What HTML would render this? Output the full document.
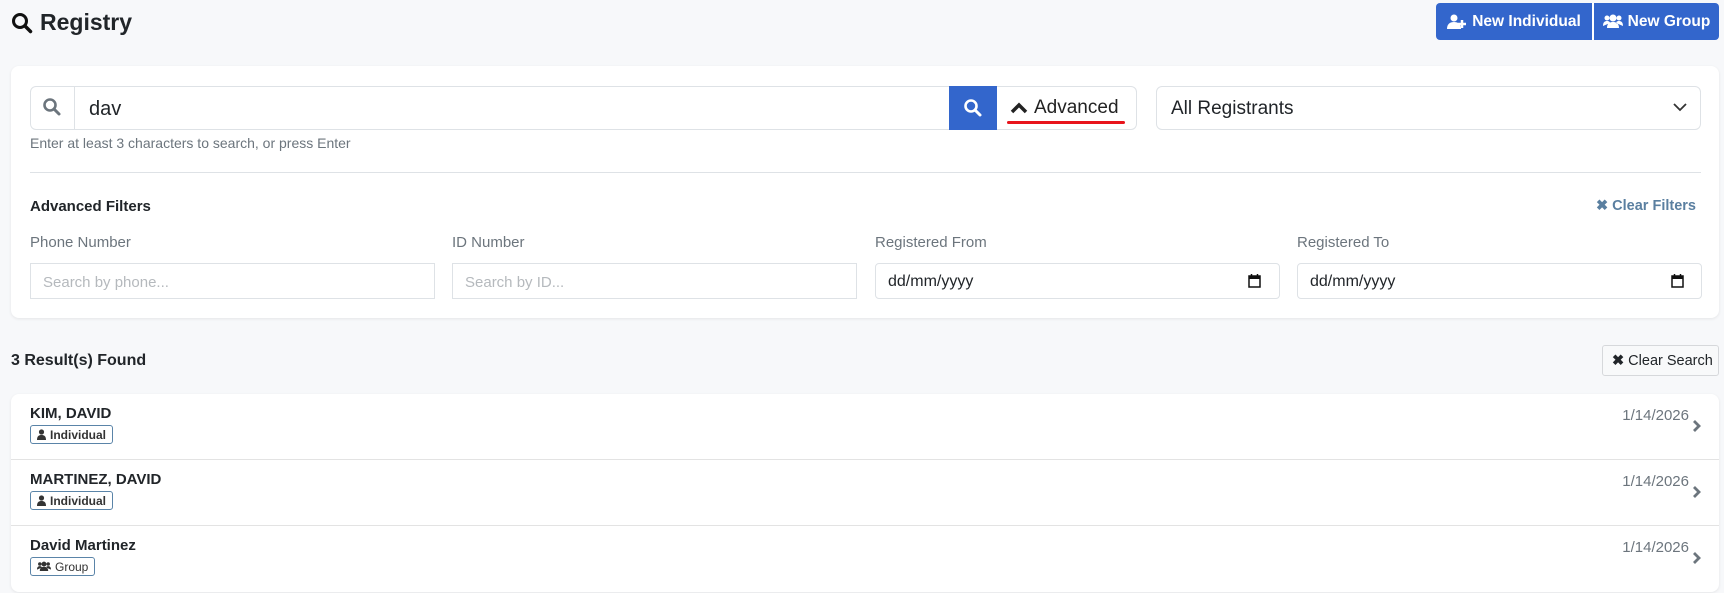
<!DOCTYPE html>
<html><head><meta charset="utf-8"><style>
*{box-sizing:border-box;margin:0;padding:0}
body{width:1724px;height:593px;background:#f7f8fa;font-family:"Liberation Sans",sans-serif;color:#212529;position:relative;overflow:hidden}
.abs{position:absolute}
.title{left:11px;top:9px;font-size:23px;font-weight:bold;display:flex;align-items:center;gap:7px}
.btns{left:1436px;top:3px;height:37px;display:flex}
.btn{background:#3366cc;color:#fff;font-weight:bold;font-size:15.5px;display:flex;align-items:center;gap:5px;height:37px;white-space:nowrap}
.card{background:#fff;border-radius:8px;box-shadow:0 1px 3px rgba(0,0,0,.08)}
.inp{border:1px solid #dee2e6;background:#fff}
.lbl{font-size:15px;color:#6c757d}
.row{position:absolute;left:0;right:0;height:66px;border-bottom:1px solid #e3e3e3}
.name{position:absolute;left:19px;top:11px;font-weight:bold;font-size:15px}
.badge{position:absolute;left:19px;top:31px;height:19px;border:1px solid #5a84a8;border-radius:3px;font-size:12px;font-weight:bold;display:flex;align-items:center;gap:4px;padding:0 6px;color:#333}
.date{position:absolute;right:30px;top:13px;font-size:15px;color:#6c757d}
.chev{position:absolute;right:17px;top:25px}
</style></head><body>
<div class="abs title"><svg width="22" height="22" viewBox="0 0 22 22"><circle cx="9" cy="9" r="6.5" fill="none" stroke="#111" stroke-width="3"/><path d="M14 14l5.5 5.5" stroke="#111" stroke-width="3.5" stroke-linecap="round"/></svg>Registry</div>
<div class="abs btns">
<div class="btn" style="border-radius:4px 0 0 4px;width:156px;justify-content:center"><svg width="20" height="16" viewBox="0 0 20 16"><circle cx="7" cy="4" r="3.5" fill="#fff"/><path d="M0 15c0-5 3-7 7-7s7 2 7 7z" fill="#fff"/><path d="M15 6v8M11 10h8" stroke="#fff" stroke-width="2.5"/></svg>New Individual</div>
<div style="width:2px;background:#fff"></div>
<div class="btn" style="border-radius:0 4px 4px 0;width:125px;justify-content:center"><svg width="20" height="15" viewBox="0 0 20 15"><circle cx="4" cy="4" r="2.5" fill="#fff"/><circle cx="16" cy="4" r="2.5" fill="#fff"/><circle cx="10" cy="4" r="3.5" fill="#fff"/><path d="M0 12c0-4 2-5 4-5s3 1 3 2zM20 12c0-4-2-5-4-5s-3 1-3 2zM4 14c0-5 3-6 6-6s6 1 6 6z" fill="#fff"/></svg>New Group</div>
</div>

<div class="abs card" style="left:11px;top:66px;width:1708px;height:252px"></div>
<div class="abs inp" style="left:30px;top:86px;width:967px;height:44px;border-radius:6px 0 0 6px"></div>
<div class="abs" style="left:74px;top:86px;width:1px;height:44px;background:#dee2e6"></div>
<svg class="abs" style="left:42px;top:97px" width="20" height="20" viewBox="0 0 20 20"><circle cx="8" cy="8" r="5.5" fill="none" stroke="#6c757d" stroke-width="2.6"/><path d="M12 12l5 5" stroke="#6c757d" stroke-width="3" stroke-linecap="round"/></svg>
<div class="abs" style="left:89px;top:98px;font-size:20px">dav</div>
<div class="abs" style="left:949px;top:86px;width:48px;height:44px;background:#3366cc"></div>
<svg class="abs" style="left:963px;top:98px" width="20" height="20" viewBox="0 0 20 20"><circle cx="8" cy="8" r="5.5" fill="none" stroke="#fff" stroke-width="2.6"/><path d="M12 12l5 5" stroke="#fff" stroke-width="3" stroke-linecap="round"/></svg>
<div class="abs inp" style="left:997px;top:86px;width:140px;height:44px;border-radius:0 6px 6px 0;border-left:none"></div>
<svg class="abs" style="left:1010px;top:101px" width="18" height="14" viewBox="0 0 18 14"><path d="M2 11l7-7 7 7" fill="none" stroke="#222" stroke-width="3.5"/></svg>
<div class="abs" style="left:1034px;top:97px;font-size:19px;color:#222">Advanced</div>
<div class="abs" style="left:1007px;top:121px;width:118px;height:3px;background:#e8141c;border-radius:2px"></div>
<div class="abs inp" style="left:1156px;top:86px;width:545px;height:44px;border-radius:6px"></div>
<div class="abs" style="left:1171px;top:98px;font-size:19px">All Registrants</div>
<svg class="abs" style="left:1673px;top:102px" width="14" height="10" viewBox="0 0 14 10"><path d="M1 2l6 6 6-6" fill="none" stroke="#333" stroke-width="1.8"/></svg>
<div class="abs" style="left:30px;top:135px;font-size:14px;color:#6c757d">Enter at least 3 characters to search, or press Enter</div>
<div class="abs" style="left:30px;top:172px;width:1671px;height:1px;background:#dee2e6"></div>
<div class="abs" style="left:30px;top:198px;font-size:15px;font-weight:bold">Advanced Filters</div>
<div class="abs" style="left:1596px;top:198px;font-size:14.5px;color:#5a7fa0;font-weight:bold">✖ Clear Filters</div>
<div class="abs lbl" style="left:30px;top:234px">Phone Number</div>
<div class="abs lbl" style="left:452px;top:234px">ID Number</div>
<div class="abs lbl" style="left:875px;top:234px">Registered From</div>
<div class="abs lbl" style="left:1297px;top:234px">Registered To</div>
<div class="abs inp" style="left:30px;top:263px;width:405px;height:36px;padding:10px 12px;font-size:15px;color:#b5b9bd">Search by phone...</div>
<div class="abs inp" style="left:452px;top:263px;width:405px;height:36px;padding:10px 12px;font-size:15px;color:#b5b9bd">Search by ID...</div>
<div class="abs inp" style="left:875px;top:263px;width:405px;height:36px;padding:9px 12px;font-size:16px;border-radius:4px">dd/mm/yyyy</div>
<div class="abs inp" style="left:1297px;top:263px;width:405px;height:36px;padding:9px 12px;font-size:16px;border-radius:4px">dd/mm/yyyy</div>
<svg class="abs" style="left:1248px;top:274px" width="13" height="14" viewBox="0 0 13 14"><rect x="1" y="2" width="11" height="11" fill="none" stroke="#111" stroke-width="1.5"/><rect x="1" y="2" width="11" height="3" fill="#111"/><path d="M3.5 0v3M9.5 0v3" stroke="#111" stroke-width="1.5"/></svg>
<svg class="abs" style="left:1671px;top:274px" width="13" height="14" viewBox="0 0 13 14"><rect x="1" y="2" width="11" height="11" fill="none" stroke="#111" stroke-width="1.5"/><rect x="1" y="2" width="11" height="3" fill="#111"/><path d="M3.5 0v3M9.5 0v3" stroke="#111" stroke-width="1.5"/></svg>

<div class="abs" style="left:11px;top:352px;font-size:16px;font-weight:bold">3 Result(s) Found</div>
<div class="abs" style="left:1602px;top:345px;width:117px;height:31px;border:1px solid #d6d8db;border-radius:3px;background:#f8f9fa;font-size:14.5px;padding:7px 9px;white-space:nowrap"><b>✖</b> Clear Search</div>

<div class="abs card" style="left:11px;top:394px;width:1708px;height:198px">
<div class="row" style="top:0"><div class="name">KIM, DAVID</div><div class="badge"><svg width="9" height="11" viewBox="0 0 9 11"><circle cx="4.5" cy="3" r="2.6" fill="#333"/><path d="M0 11c0-4 2-5 4.5-5s4.5 1 4.5 5z" fill="#333"/></svg>Individual</div><div class="date">1/14/2026</div><svg class="chev" width="10" height="14" viewBox="0 0 10 14"><path d="M2 2l5 5-5 5" fill="none" stroke="#6c757d" stroke-width="2.8"/></svg></div>
<div class="row" style="top:66px"><div class="name">MARTINEZ, DAVID</div><div class="badge"><svg width="9" height="11" viewBox="0 0 9 11"><circle cx="4.5" cy="3" r="2.6" fill="#333"/><path d="M0 11c0-4 2-5 4.5-5s4.5 1 4.5 5z" fill="#333"/></svg>Individual</div><div class="date">1/14/2026</div><svg class="chev" width="10" height="14" viewBox="0 0 10 14"><path d="M2 2l5 5-5 5" fill="none" stroke="#6c757d" stroke-width="2.8"/></svg></div>
<div class="row" style="top:132px;border-bottom:none"><div class="name">David Martinez</div><div class="badge" style="font-weight:normal"><svg width="14" height="11" viewBox="0 0 20 15"><circle cx="4" cy="4" r="2.5" fill="#333"/><circle cx="16" cy="4" r="2.5" fill="#333"/><circle cx="10" cy="4" r="3.5" fill="#333"/><path d="M0 12c0-4 2-5 4-5s3 1 3 2zM20 12c0-4-2-5-4-5s-3 1-3 2zM4 14c0-5 3-6 6-6s6 1 6 6z" fill="#333"/></svg>Group</div><div class="date">1/14/2026</div><svg class="chev" width="10" height="14" viewBox="0 0 10 14"><path d="M2 2l5 5-5 5" fill="none" stroke="#6c757d" stroke-width="2.8"/></svg></div>
</div>
</body></html>
